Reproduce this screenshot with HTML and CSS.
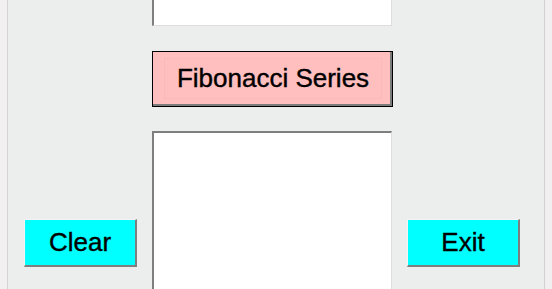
FILE: index.html
```html
<!DOCTYPE html>
<html lang="en">

<head>
    <meta charset="UTF-8">
    <meta name="viewport" content="width=device-width, initial-scale=1.0">
    <link rel="stylesheet" href="styles.css">
    <title>Fibonacci Series</title>
</head>

<body>

    <div class="window">
        <div class="edge edge-left"></div>

        <div class="main">
            <div class="side">
                <button class="btn btn-side">Clear</button>
            </div>

            <div class="middle"> <!-- caixas de texto e botao principal -->
                <textarea class="box box-top"></textarea>
                <button class="btn btn-fib"><span class="focus">Fibonacci Series</span></button>
                <textarea class="box box-bottom"></textarea>
            </div>

            <div class="side">
                <button class="btn btn-side">Exit</button>
            </div>
        </div>

        <div class="edge edge-right"></div>
    </div>

</body>

</html>
```

FILE: styles.css
```css
body {
    margin: 0;
    background-color: #eceeed;
    font-family: "Liberation Sans", Arial, sans-serif;
    overflow: hidden;
}

.window {
    display: flex;
    height: 289px;
    overflow: hidden;
}

.edge {
    width: 7px;
    flex: none;
    background-color: #f1efef;
}

.edge-left {
    border-right: 1px solid #d6d3d3;
}

.edge-right {
    border-left: 1px solid #d3d0d0;
    margin-left: auto;
}

.main {
    display: flex;
    align-items: flex-start;
    padding-left: 16px;
}

.side {
    padding-top: 219px;
}

.middle {
    display: flex;
    flex-direction: column;
    width: 240px;
    margin: -20px 15px 0 15px;
}

.middle > * {
    flex: none;
}

.box {
    display: block;
    box-sizing: border-box;
    width: 240px;
    resize: none;
    background-color: #fff;
    border-style: solid;
    border-width: 2px 1px 1px 2px;
    border-color: #7e7e7e #dedede #dedede #7e7e7e;
    margin: 0;
    padding: 0;
}

.box-top {
    height: 46px;
}

.box-bottom {
    height: 200px;
    margin-top: 24px;
}

.btn {
    display: block;
    box-sizing: border-box;
    font-family: "Liberation Sans", Arial, sans-serif;
    font-size: 26px;
    color: #000;
    -webkit-text-stroke: 0.4px #000;
    padding: 0;
    margin: 0;
    cursor: pointer;
}

.btn-fib {
    display: flex;
    align-items: center;
    width: 241px;
    height: 56px;
    margin-top: 25px;
    padding: 0 11px 2px 12px;
    background-color: #ffbfbf;
    border: 1px solid #000;
    box-shadow: inset -2px -2px 0 #7c7c7c;
}

.focus {
    flex: 1;
    padding: 8px 0 9px;
    line-height: 22px;
    outline: 1px dotted #f3b4b4;
}

.btn-side {
    width: 113px;
    height: 48px;
    background-color: #00ffff;
    border-style: solid;
    border-width: 1px 2px 2px 1px;
    border-color: #f4f4f4 #7e7e7e #7e7e7e #f4f4f4;
}
```
